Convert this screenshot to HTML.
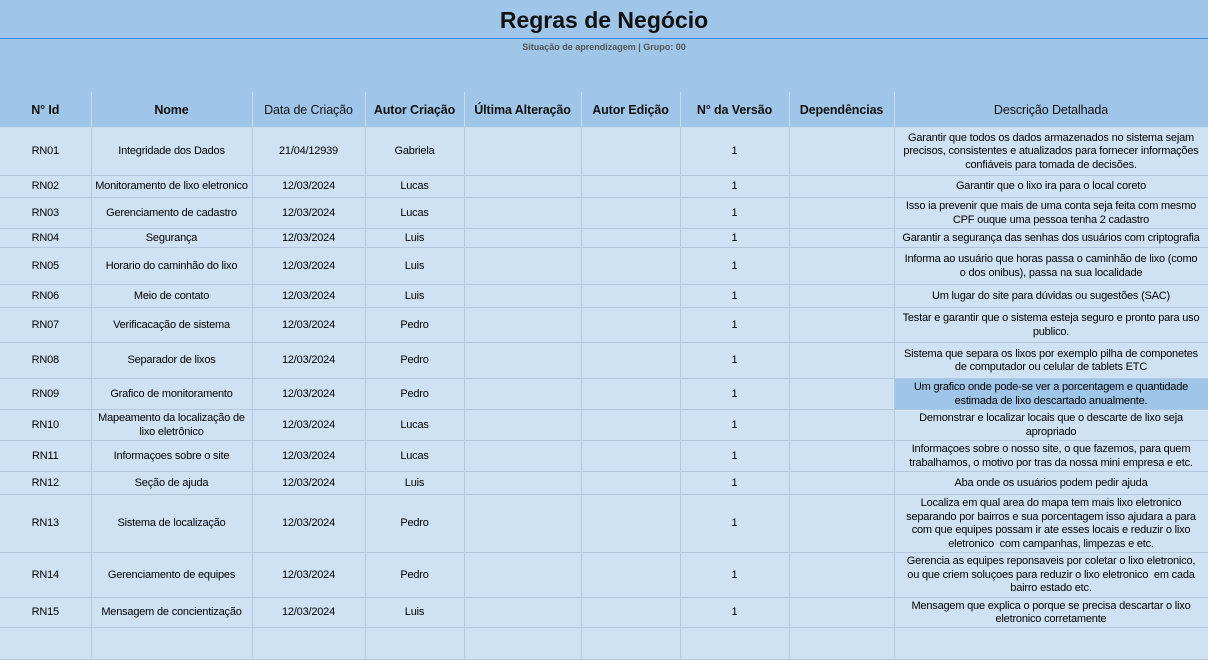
<!DOCTYPE html>
<html><head><meta charset="utf-8"><style>
*{margin:0;padding:0;box-sizing:border-box}
body{width:1208px;height:657px;overflow:hidden;background:#cfe2f3;font-family:"Liberation Sans",Arial,sans-serif;color:#000;position:relative}
.top{position:absolute;left:0;top:0;width:1208px;height:92px;background:#9fc5e8}
.title{position:absolute;left:0;width:1208px;top:7px;text-align:center;font-size:23px;font-weight:bold;color:#111}
.line{position:absolute;left:0;top:38px;width:1208px;height:1px;background:#3d85e8}
.sub{position:absolute;left:0;width:1208px;top:42px;text-align:center;font-size:9px;font-weight:bold;color:#555}
table{position:absolute;left:0;top:92px;border-collapse:collapse;table-layout:fixed;width:1208px}
td,th{border:1px solid #b4c7dc;text-align:center;vertical-align:middle;font-size:11px;line-height:13.5px;letter-spacing:-0.2px;white-space:nowrap;overflow:hidden;padding:2px 0 0 0}
th{background:#9fc5e8;font-size:12.5px;font-weight:bold;letter-spacing:-0.1px;height:35px;border-top:none;border-color:#c8dcef;padding-top:3px;color:#111}
th.n{font-weight:normal}
tr td:first-child,tr th:first-child{border-left:none}
td{background:#cfe2f3}
td.hl{background:#9fc5e8}
</style></head><body>
<div class="top"></div>
<div class="title">Regras de Negócio</div>
<div class="line"></div>
<div class="sub">Situação de aprendizagem | Grupo: 00</div>
<table>
<colgroup><col style="width:91px"><col style="width:161px"><col style="width:113px"><col style="width:99px"><col style="width:117px"><col style="width:99px"><col style="width:109px"><col style="width:105px"><col style="width:314px"></colgroup>
<tr><th>N° Id</th><th>Nome</th><th class="n">Data de Criação</th><th>Autor Criação</th><th>Última Alteração</th><th>Autor Edição</th><th>N° da Versão</th><th>Dependências</th><th class="n">Descrição Detalhada</th></tr>
<tr style="height:48px"><td>RN01</td><td>Integridade dos Dados</td><td>21/04/12939</td><td>Gabriela</td><td></td><td></td><td>1</td><td></td><td>Garantir que todos os dados armazenados no sistema sejam<br>precisos, consistentes e atualizados para fornecer informações<br>confiáveis para tomada de decisões.</td></tr>
<tr style="height:22px"><td>RN02</td><td>Monitoramento de lixo eletronico</td><td>12/03/2024</td><td>Lucas</td><td></td><td></td><td>1</td><td></td><td>Garantir que o lixo ira para o local coreto</td></tr>
<tr style="height:31px"><td>RN03</td><td>Gerenciamento de cadastro</td><td>12/03/2024</td><td>Lucas</td><td></td><td></td><td>1</td><td></td><td>Isso ia prevenir que mais de uma conta seja feita com mesmo<br>CPF ouque uma pessoa tenha 2 cadastro</td></tr>
<tr style="height:19px"><td>RN04</td><td>Segurança</td><td>12/03/2024</td><td>Luis</td><td></td><td></td><td>1</td><td></td><td>Garantir a segurança das senhas dos usuários com criptografia</td></tr>
<tr style="height:37px"><td>RN05</td><td>Horario do caminhão do lixo</td><td>12/03/2024</td><td>Luis</td><td></td><td></td><td>1</td><td></td><td>Informa ao usuário que horas passa o caminhão de lixo (como<br>o dos onibus), passa na sua localidade</td></tr>
<tr style="height:23px"><td>RN06</td><td>Meio de contato</td><td>12/03/2024</td><td>Luis</td><td></td><td></td><td>1</td><td></td><td>Um lugar do site para dúvidas ou sugestões (SAC)</td></tr>
<tr style="height:35px"><td>RN07</td><td>Verificacação de sistema</td><td>12/03/2024</td><td>Pedro</td><td></td><td></td><td>1</td><td></td><td>Testar e garantir que o sistema esteja seguro e pronto para uso<br>publico.</td></tr>
<tr style="height:36px"><td>RN08</td><td>Separador de lixos</td><td>12/03/2024</td><td>Pedro</td><td></td><td></td><td>1</td><td></td><td>Sistema que separa os lixos por exemplo pilha de componetes<br>de computador ou celular de tablets ETC</td></tr>
<tr style="height:31px"><td>RN09</td><td>Grafico de monitoramento</td><td>12/03/2024</td><td>Pedro</td><td></td><td></td><td>1</td><td></td><td class="hl">Um grafico onde pode-se ver a porcentagem e quantidade<br>estimada de lixo descartado anualmente.</td></tr>
<tr style="height:31px"><td>RN10</td><td>Mapeamento da localização de<br>lixo eletrônico</td><td>12/03/2024</td><td>Lucas</td><td></td><td></td><td>1</td><td></td><td>Demonstrar e localizar locais que o descarte de lixo seja<br>apropriado</td></tr>
<tr style="height:31px"><td>RN11</td><td>Informaçoes sobre o site</td><td>12/03/2024</td><td>Lucas</td><td></td><td></td><td>1</td><td></td><td>Informaçoes sobre o nosso site, o que fazemos, para quem<br>trabalhamos, o motivo por tras da nossa mini empresa e etc.</td></tr>
<tr style="height:23px"><td>RN12</td><td>Seção de ajuda</td><td>12/03/2024</td><td>Luis</td><td></td><td></td><td>1</td><td></td><td>Aba onde os usuários podem pedir ajuda</td></tr>
<tr style="height:58px"><td>RN13</td><td>Sistema de localização</td><td>12/03/2024</td><td>Pedro</td><td></td><td></td><td>1</td><td></td><td>Localiza em qual area do mapa tem mais lixo eletronico<br>separando por bairros e sua porcentagem isso ajudara a para<br>com que equipes possam ir ate esses locais e reduzir o lixo<br>eletronico&nbsp; com campanhas, limpezas e etc.</td></tr>
<tr style="height:45px"><td>RN14</td><td>Gerenciamento de equipes</td><td>12/03/2024</td><td>Pedro</td><td></td><td></td><td>1</td><td></td><td>Gerencia as equipes reponsaveis por coletar o lixo eletronico,<br>ou que criem soluçoes para reduzir o lixo eletronico&nbsp; em cada<br>bairro estado etc.</td></tr>
<tr style="height:30px"><td>RN15</td><td>Mensagem de concientização</td><td>12/03/2024</td><td>Luis</td><td></td><td></td><td>1</td><td></td><td>Mensagem que explica o porque se precisa descartar o lixo<br>eletronico corretamente</td></tr>
<tr style="height:32px"><td></td><td></td><td></td><td></td><td></td><td></td><td></td><td></td><td></td></tr>
</table>
</body></html>
